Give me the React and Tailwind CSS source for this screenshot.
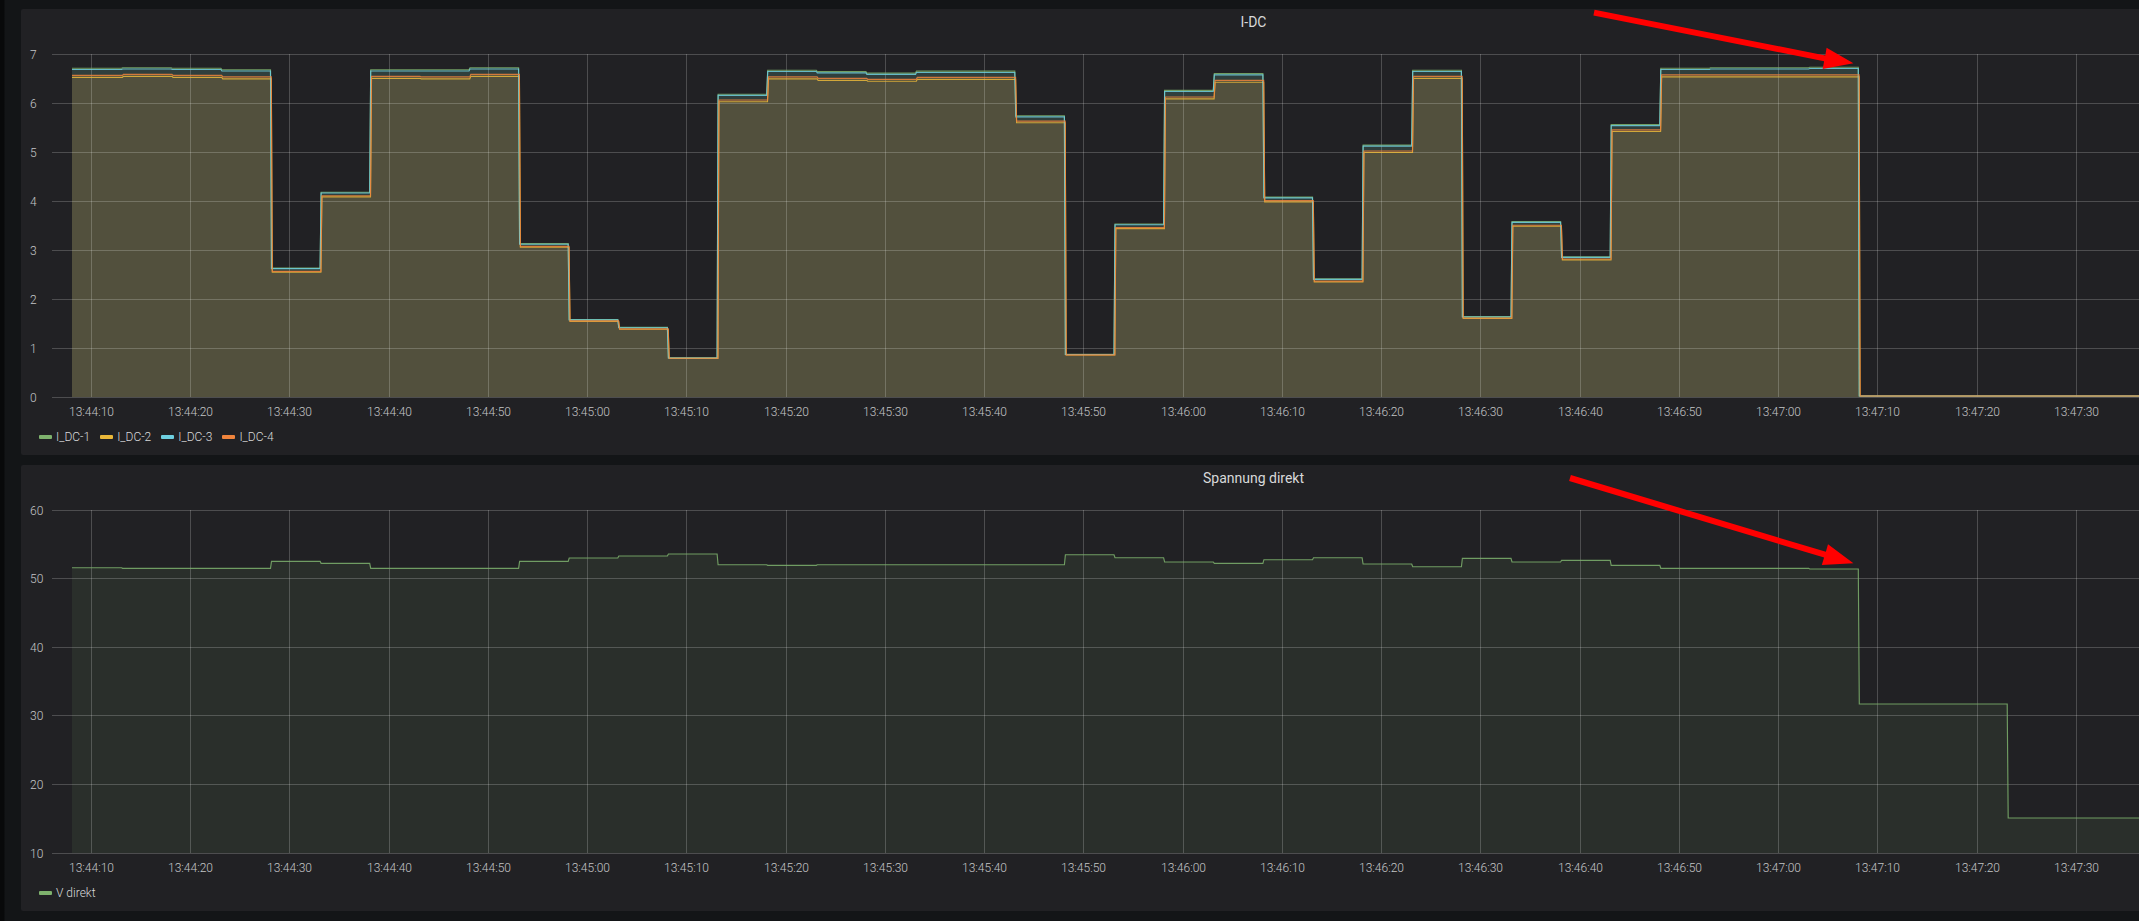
import React from "react";

const X0 = 72;
const STEP = 49.62;
const xk = (k) => X0 + STEP * k;
const gridX = Array.from({ length: 21 }, (_, i) => Math.floor(91.5 + 99.24 * i) + 0.5);
const secs = ["13:44:10","13:44:20","13:44:30","13:44:40","13:44:50","13:45:00","13:45:10","13:45:20","13:45:30","13:45:40","13:45:50","13:46:00","13:46:10","13:46:20","13:46:30","13:46:40","13:46:50","13:47:00","13:47:10","13:47:20","13:47:30"];

const top = [6.71,6.72,6.71,6.68,2.63,4.18,6.68,6.68,6.72,3.13,1.58,1.42,0.80,6.18,6.67,6.64,6.61,6.65,6.65,5.74,0.87,3.53,6.26,6.60,4.08,2.41,5.14,6.67,1.64,3.58,2.86,5.56,6.71,6.72,6.72,6.73,0.02];
const low = [6.55,6.57,6.55,6.52,2.56,4.10,6.53,6.52,6.57,3.07,1.55,1.39,0.79,6.05,6.52,6.49,6.47,6.51,6.51,5.62,0.86,3.45,6.11,6.45,4.00,2.36,5.01,6.53,1.61,3.50,2.81,5.44,6.56,6.56,6.56,6.56,0.02];

const yI = (v) => 397 - v * 49;
const seriesI = [
  { c: "#7eb26d", v: top, dx: 0 },
  { c: "#eab839", v: low.map((t) => t * 0.996), dx: 0.8 },
  { c: "#6ed0e0", v: top.map((t) => t * 0.996), dx: 0 },
  { c: "#ef843c", v: low.map((t) => t * 1.002), dx: 0.8 },
];

const vY = [567.7,568.3,568.3,568.3,561.3,563.3,568.3,568.3,568.3,561.3,558,556,554,564.7,565.3,564.7,564.7,564.7,564.7,564.7,554.7,557.7,562,563.3,559.7,557.7,564,566.7,558.3,562,560.3,565.3,568.3,568.3,568.3,569,704,704,704,818];

function stepPts(ys, dx) {
  const pts = [];
  ys.forEach((y, k) => {
    const a = xk(k) + dx;
    pts.push([k === 0 ? X0 : a + 1, y]);
    pts.push([k === ys.length - 1 ? 2200 : xk(k + 1) + dx, y]);
  });
  return pts;
}
const toLine = (pts) => "M" + pts.map((p) => `${p[0].toFixed(1)} ${p[1].toFixed(1)}`).join("L");
const toArea = (pts, base) => `${toLine(pts)}L${pts[pts.length - 1][0].toFixed(1)} ${base}L${pts[0][0].toFixed(1)} ${base}Z`;

function Grid({ ticks, yTop, yBottom }) {
  return (
    <g>
      {ticks.map((t) => (
        <line key={t.label} x1="52" x2="2500" y1={t.y} y2={t.y} stroke="#ffffff" strokeOpacity="0.2" strokeWidth="1" />
      ))}
      {gridX.map((x) => (
        <line key={x} x1={x} x2={x} y1={yTop} y2={yBottom} stroke="#ffffff" strokeOpacity="0.2" strokeWidth="1" />
      ))}
    </g>
  );
}

function Labels({ ticks, y }) {
  return (
    <g className="fill-[#c4c5c7] text-[12px] font-light">
      {ticks.map((t) => (
        <text key={t.label} x="30" y={t.y + 4}>{t.label}</text>
      ))}
      {gridX.map((x, i) => (
        <text key={x} x={x} y={y} textAnchor="middle">{secs[i]}</text>
      ))}
    </g>
  );
}

function Legend({ items }) {
  return (
    <div className="h-[30px] pl-[18px] flex items-center gap-[10px] text-[12px] font-light text-[#d8d9da]">
      {items.map((it) => (
        <div key={it.name} className="flex items-center gap-[4px]">
          <span className={`w-[13px] h-[4px] rounded-[1px] ${it.bg}`} />
          <span>{it.name}</span>
        </div>
      ))}
    </div>
  );
}

const ticksI = [7, 6, 5, 4, 3, 2, 1, 0].map((v, i) => ({ label: String(v), y: 54.5 + 49 * i }));
const ticksV = [["60",510.5],["50",578.5],["40",647.5],["30",715.5],["20",784.5],["10",853.5]].map(([label, y]) => ({ label, y }));

export default function App() {
  const ptsV = stepPts(vY, 0);
  return (
    <div className="relative w-[2139px] h-[921px] overflow-hidden pl-[21px] pt-[9px] flex flex-col gap-[10px] bg-[linear-gradient(90deg,#08090a_0,#08090a_4px,#131517_5px)] font-['Roboto',sans-serif]">
      <section className="w-[2465px] h-[446px] shrink-0 bg-[#212124] rounded-[2px]">
        <h2 className="h-[27px] leading-[27px] text-center text-[14px] font-normal text-[#d8d9da]">I-DC</h2>
        <svg width="2465" height="386" viewBox="21 36 2465 386" className="block">
          {seriesI.map((s) => (
            <path key={s.c} d={toArea(stepPts(s.v.map(yI), s.dx), 397)} fill={s.c} fillOpacity="0.1" />
          ))}
          <Grid ticks={ticksI} yTop={54} yBottom={397} />
          {seriesI.map((s) => (
            <path key={s.c} d={toLine(stepPts(s.v.map(yI), s.dx))} fill="none" stroke={s.c} strokeWidth="1.15" strokeOpacity="0.85" />
          ))}
          <Labels ticks={ticksI} y={416} />
        </svg>
        <Legend
          items={[
            { name: "I_DC-1", bg: "bg-[#7eb26d]" },
            { name: "I_DC-2", bg: "bg-[#eab839]" },
            { name: "I_DC-3", bg: "bg-[#6ed0e0]" },
            { name: "I_DC-4", bg: "bg-[#ef843c]" },
          ]}
        />
      </section>

      <section className="w-[2465px] h-[446px] shrink-0 bg-[#212124] rounded-[2px]">
        <h2 className="h-[27px] leading-[27px] text-center text-[14px] font-normal text-[#d8d9da]">Spannung direkt</h2>
        <svg width="2465" height="386" viewBox="21 492 2465 386" className="block">
          <path d={toArea(ptsV, 853)} fill="#7eb26d" fillOpacity="0.1" />
          <Grid ticks={ticksV} yTop={510} yBottom={853} />
          <path d={toLine(ptsV)} fill="none" stroke="#7eb26d" strokeWidth="1.15" strokeOpacity="0.85" />
          <Labels ticks={ticksV} y={872} />
        </svg>
        <Legend items={[{ name: "V direkt", bg: "bg-[#7eb26d]" }]} />
      </section>

      <svg width="2139" height="921" viewBox="0 0 2139 921" className="absolute inset-0 pointer-events-none">
        <polygon fill="#ff0000" points="1594.6,9.8 1825.3,55.4 1826.6,47.7 1853.4,63.3 1822.7,69 1824.1,61.2 1593.4,15.6" />
        <polygon fill="#ff0000" points="1570.9,475.1 1825.9,551.8 1828,544.3 1853.4,563.3 1821.8,565 1824.1,557.6 1569.1,480.9" />
      </svg>
    </div>
  );
}
